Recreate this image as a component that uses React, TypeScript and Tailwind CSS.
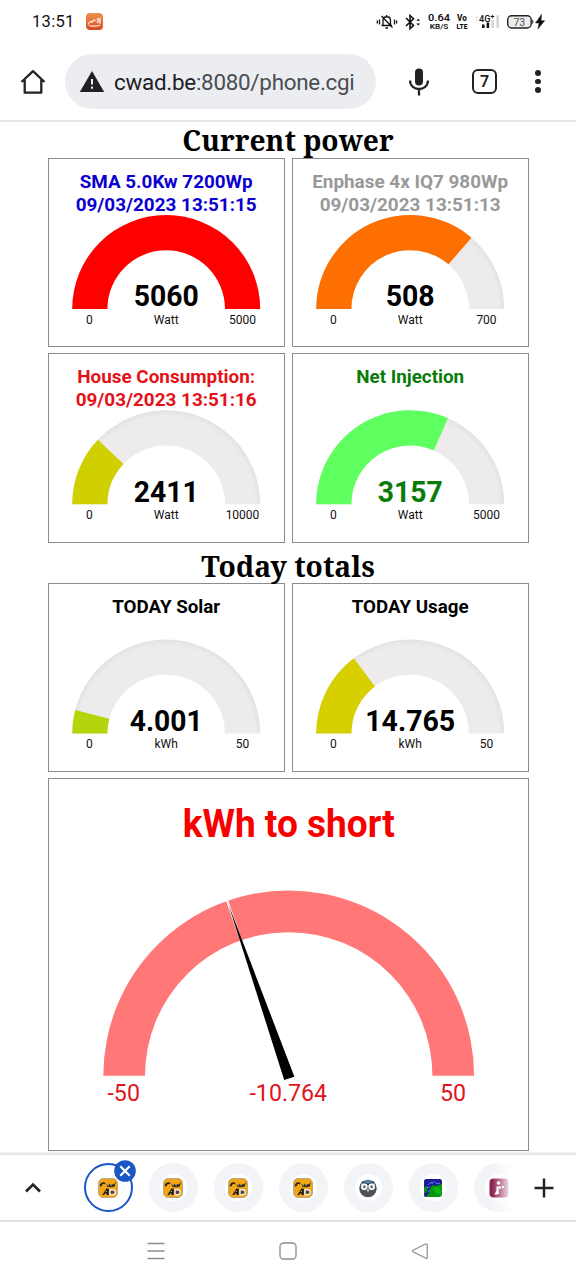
import type { ReactNode } from "react";

type GaugeProps = {
  title: string[];
  titleWidths: number[];
  titleColor: string;
  value: string;
  valueWidth: number;
  valueColor?: string;
  unit: string;
  max: string;
  ratio: number;
  color: string;
  shift?: number;
};

const SANS = "Roboto, 'Liberation Sans', sans-serif";

// Ring segment between two ratios of a half circle, measured from the left end.
function arc(cx: number, cy: number, outer: number, inner: number, from: number, to: number) {
  const point = (radius: number, ratio: number) => {
    const angle = Math.PI * (1 - ratio);
    return `${cx + radius * Math.cos(angle)} ${cy - radius * Math.sin(angle)}`;
  };
  return `M${point(inner, from)}L${point(outer, from)}A${outer} ${outer} 0 0 1 ${point(outer, to)}L${point(inner, to)}A${inner} ${inner} 0 0 0 ${point(inner, from)}Z`;
}

function Gauge(props: GaugeProps) {
  const cx = 118.2;
  const cy = 151;
  return (
    <div className="border border-[#8c8c8c] bg-white">
      <svg
        viewBox={`1 ${1 + (props.shift ?? 0)} 235 187`}
        className="block h-[187px] w-[235px]"
        fontFamily={SANS}
        textAnchor="middle"
      >
        <defs>
          <radialGradient id="track" gradientUnits="userSpaceOnUse" cx={cx} cy={cy} r="94">
            <stop offset="0.94" stopColor="#edebeb" />
            <stop offset="1" stopColor="#e3e1e1" />
          </radialGradient>
        </defs>
        {props.title.map((line, index) => (
          <text
            key={line}
            x={cx}
            y={30.2 + index * 22.3}
            fontSize="19.2"
            fontWeight="700"
            fill={props.titleColor}
            textLength={props.titleWidths[index]}
            lengthAdjust="spacingAndGlyphs"
          >
            {line}
          </text>
        ))}
        <path d={arc(cx, cy, 94, 58.8, 0, 1)} fill="url(#track)" />
        <path d={arc(cx, cy, 94, 58.8, 0, props.ratio)} fill={props.color} />
        <text
          x={cx}
          y="148.4"
          fontSize="29"
          fontWeight="700"
          fill={props.valueColor ?? "#000"}
          textLength={props.valueWidth}
          lengthAdjust="spacingAndGlyphs"
        >
          {props.value}
        </text>
        <g fontSize="12" fill="#111">
          <text x="41.3" y="165.8">0</text>
          <text x={cx} y="165.8">{props.unit}</text>
          <text x="194.5" y="165.8">{props.max}</text>
        </g>
      </svg>
    </div>
  );
}

function NeedleGauge() {
  return (
    <div className="h-[373px] w-[481px] border border-[#8c8c8c] bg-white">
      <svg viewBox="49 779 479 371" className="block h-[371px] w-[479px]" fontFamily={SANS} textAnchor="middle">
        <text
          x="288.7"
          y="837"
          fontSize="38.2"
          fontWeight="700"
          fill="#f90000"
          textLength="212"
          lengthAdjust="spacingAndGlyphs"
        >
          kWh to short
        </text>
        <path d={arc(288.7, 1075.8, 185.4, 143.7, 0, 1)} fill="#ff7777" />
        <path d="M227.1 900.5L241 940.5" stroke="#fff" strokeWidth="2.2" />
        <path d="M228.3 904L284.2 1080L294.4 1076.7Z" fill="#000" />
        <g fontSize="23.2" fill="#e0141c">
          <text x="123.7" y="1101.3">-50</text>
          <text x="288.3" y="1101.3">-10.764</text>
          <text x="453" y="1101.3">50</text>
        </g>
      </svg>
    </div>
  );
}

function Heading(props: { children: ReactNode; className: string }) {
  return (
    <h2
      className={`relative z-10 flex justify-center whitespace-nowrap font-['Noto_Serif','DejaVu_Serif_Condensed','DejaVu_Serif',serif] text-[28.2px] font-bold text-black ${props.className}`}
    >
      {props.children}
    </h2>
  );
}

function StatusBar() {
  return (
    <div className="flex h-[43px] items-center pl-[32px] font-[Roboto,sans-serif] text-[#111]">
      <span className="w-[54px] pt-[2px] text-[16.5px] tracking-[0.3px]">13:51</span>
      <svg viewBox="0 0 17 17" className="h-[17px] w-[17px]">
        <defs>
          <linearGradient id="app" x2="0" y2="1">
            <stop stopColor="#ee9350" />
            <stop offset="1" stopColor="#d94a20" />
          </linearGradient>
        </defs>
        <rect width="17" height="17" rx="4" fill="url(#app)" />
        <path d="M2 11.5l2-3 2 .7 2-2.4 1.6 1.2M10.5 7l2.5-2M3 12.5c3 1 9 .6 11-.5M11 10l3-4v5" fill="none" stroke="#fde7d8" strokeWidth="1.3" />
      </svg>
      <svg viewBox="375 10 172 24" className="ml-[272px] h-[24px] w-[172px]" fontFamily="Roboto, sans-serif" fill="#111">
        {/* muted bell */}
        <g fill="none" stroke="#111" strokeWidth="1.3">
          <path d="M381.5 25.5h10.5M383 25v-4.5c0-5 7.5-5 7.5 0V25M381.5 16l11 11.5M386.7 15v2M385.5 28h2.5" />
          <path d="M377.3 20.5v3M379.5 19.5v5M394.5 19.5v5M396.6 20.5v3" />
        </g>
        {/* bluetooth */}
        <path d="M406 18l7.5 7.5-3.5 3.2V15.5l3.5 3.2L406 26" fill="none" stroke="#111" strokeWidth="1.6" />
        <path d="M416.3 20.8l1.9-2 1.9 2zM416.3 23.5l1.9 2 1.9-2z" />
        <g textAnchor="middle" fontWeight="600">
          <text x="439" y="20.8" fontSize="9.4" textLength="22" lengthAdjust="spacingAndGlyphs">0.64</text>
          <text x="439" y="29.2" fontSize="7.4" textLength="18.5" lengthAdjust="spacingAndGlyphs">KB/S</text>
          <text x="462" y="20.8" fontSize="8.4" fontWeight="800" textLength="9.8" lengthAdjust="spacingAndGlyphs">Vo</text>
          <text x="462" y="28.6" fontSize="7.4" fontWeight="900" textLength="10.8" lengthAdjust="spacingAndGlyphs">LTE</text>
          <text x="484.7" y="21.6" fontSize="9.4" fontWeight="500" textLength="11.5" lengthAdjust="spacingAndGlyphs">4G</text>
          <text x="492.4" y="18.8" fontSize="7">+</text>
        </g>
        <path d="M475.3 17.7l1.3-1.5 1.3 1.5zM475.3 19.5l1.3 1.5 1.3-1.5z" fill="#ccc" />
        <path d="M482 24.5h2.6v3.5H482zM486.6 22.5h2.6v5.5h-2.6z" />
        <path d="M491.5 20h2.4v8h-2.4zM496.5 15.3h2.4V28h-2.4z" fill="#d2d2d2" />
        <rect x="507.7" y="15.7" width="23.5" height="12.3" rx="4" fill="#ececec" stroke="#222" strokeWidth="1.4" />
        <path d="M532.3 19.5c1.4.5 1.4 4 0 4.5z" />
        <text x="519.3" y="25.6" fontSize="10.5" fill="#555" textAnchor="middle">73</text>
        <path d="M541.5 14.5l-6 8.5h3.6l-1.2 6 6.7-8.3H541z" stroke="#111" strokeWidth="0.5" />
      </svg>
    </div>
  );
}

function BrowserBar() {
  return (
    <div className="flex h-[79px] items-center border-b-2 border-[#e4e4e6] pl-[20px]">
      <svg viewBox="0 0 26 26" className="h-[26px] w-[26px]" fill="none" stroke="#222" strokeWidth="2.3">
        <path d="M1.5 13L13 2.2 24.5 13M4.7 11v12.7h16.6V11" strokeLinejoin="round" />
      </svg>
      <div className="ml-[19px] flex h-[55px] w-[311px] items-center rounded-full bg-[#ebedf1] pl-[14px]">
        <svg viewBox="0 0 26 22" className="h-[22px] w-[26px]">
          <path d="M13 0L25.2 21H.8z" fill="#202124" />
          <path d="M12 8h2v5.5h-2zM12 15.5h2v2.2h-2z" fill="#ebedf1" />
        </svg>
        <span className="ml-[9px] whitespace-nowrap pt-[2px] font-[Roboto,sans-serif] text-[22.4px] tracking-[-0.26px] text-[#4a4d51]">
          <span className="text-[#202124]">cwad.be</span>:8080/phone.cgi
        </span>
      </div>
      <svg viewBox="0 0 20 28" className="ml-[33px] h-[28px] w-[20px]">
        <rect x="6" y="0.5" width="8" height="17" rx="4" fill="#222" />
        <path d="M1 12.5c0 11.3 18 11.3 18 0M10 21v6.5" fill="none" stroke="#222" strokeWidth="2.3" />
      </svg>
      <div className="ml-[43px] flex h-[25px] w-[25px] items-center justify-center rounded-[6px] border-[2.5px] border-[#222] pt-px font-[Roboto,sans-serif] text-[16px] font-semibold text-[#222]">
        7
      </div>
      <div className="ml-[38px] flex flex-col gap-[3px]">
        <span className="h-[5.5px] w-[5.5px] rounded-full bg-[#222]" />
        <span className="h-[5.5px] w-[5.5px] rounded-full bg-[#222]" />
        <span className="h-[5.5px] w-[5.5px] rounded-full bg-[#222]" />
      </div>
    </div>
  );
}

function CwadIcon() {
  return (
    <svg viewBox="0 0 20 20" className="h-[20px] w-[20px]">
      <rect x="0.5" y="0.5" width="19" height="19" rx="4.5" fill="#f2a516" stroke="#b9a88a" />
      <path d="M1.8 8.5C1.5 4.5 6 3.5 7.5 5l-.7 1.5C5.5 5.500 4 6 4 8zM8.500 5.500l1.500 2 1.200-2 1.300 1.800 1-1.300 2.500.5L18 3.500l-1.300 5-3.500.8-4-.6z" fill="#2b2622" />
      <path d="M10 8.2l.8-2M13 8.2l.8-2" stroke="#b8b0a0" fill="none" strokeWidth="0.8" />
      <path d="M4.3 17l4.200-6.500h2.300V17H8.600v-1.500H7L6.200 17z" fill="#201c18" />
      <path d="M12 11.800h2.300c4 0 4 5 0 5H12z" fill="#51483d" stroke="#f4eadb" strokeWidth="1.4" />
      <path d="M7.500 14l1.200-1.500V14z" fill="#fff" />
    </svg>
  );
}

function OwlIcon() {
  return (
    <svg viewBox="0 0 20 20" className="h-[20px] w-[20px]">
      <circle cx="10" cy="10.5" r="8.7" fill="#505255" />
      <path d="M2 7C4 1 16 1 18 7l-8 2z" fill="#4f86b5" />
      <path d="M4 3.5l6 3 6-3" fill="none" stroke="#383e44" strokeWidth="1.2" />
      <circle cx="6.3" cy="8.7" r="2.4" fill="#6b7073" stroke="#fff" strokeWidth="1.7" />
      <circle cx="13.7" cy="8.7" r="2.4" fill="#6b7073" stroke="#fff" strokeWidth="1.7" />
      <path d="M9 11.5h2l-1 3z" fill="#fff" />
    </svg>
  );
}

function MapIcon() {
  return (
    <svg viewBox="0 0 20 20" className="h-[20px] w-[20px]">
      <rect x="1" y="1" width="18" height="18" rx="3" fill="#08960f" />
      <path d="M1 4q0-3 3-3h12q3 0 3 3v2l-6 2-4-1-2 4-1 4-3 4q-2 0-2-2z" fill="#1b1b9c" />
      <path d="M1 9l4-1-1 6-3 2z" fill="#0a8a1c" />
      <path d="M5 7l3-3 1 2 2-3M12 4l2 2 3-1M4 10l3-1M5 14l2-2" fill="none" stroke="#6b7fe0" strokeWidth="0.9" />
      <path d="M10 10l5-1 3 4v4l-5-2z" fill="#0db713" />
    </svg>
  );
}

function RunnerIcon() {
  return (
    <svg viewBox="0 0 20 20" className="h-[20px] w-[20px]">
      <rect x="0.5" y="0.5" width="19" height="19" rx="4" fill="#8e2352" />
      <circle cx="9.5" cy="5" r="1.8" fill="#fff" />
      <path d="M6.5 16.5l2-3.5V9.5H12M8.700 10v4l.5 2" fill="none" stroke="#fff" strokeWidth="2" />
      <path d="M13 9h2" stroke="#fff" strokeWidth="2" />
    </svg>
  );
}

function Tab(props: { children: ReactNode }) {
  return (
    <div className="flex h-[49px] w-[49px] shrink-0 items-center justify-center rounded-full bg-[#f2f4f7]">
      <div className="flex h-[27px] w-[27px] items-center justify-center rounded-full bg-white">
        {props.children}
      </div>
    </div>
  );
}

function TabStrip() {
  return (
    <div className="flex h-[67px] items-center border-b-2 border-[#e2e2e2] bg-white pl-[24px]">
      <svg viewBox="0 0 18 18" className="h-[18px] w-[18px]">
        <path d="M2 12.5L9 5.5l7 7" fill="none" stroke="#222" strokeWidth="2.6" />
      </svg>
      <div className="relative ml-[41.5px] flex w-[428px] gap-[16.1px]">
        <div className="relative flex h-[49px] w-[49px] shrink-0 items-center justify-center rounded-full border-[2.5px] border-[#1a57c4]">
          <CwadIcon />
          <svg viewBox="0 0 22 22" className="absolute -top-[5px] right-[-5px] h-[22px] w-[22px]">
            <circle cx="11" cy="11" r="10.8" fill="#1a57c4" />
            <path d="M6.3 6.3l9.4 9.4M15.7 6.3l-9.4 9.4" stroke="#fff" strokeWidth="2.2" />
          </svg>
        </div>
        <Tab><CwadIcon /></Tab>
        <Tab><CwadIcon /></Tab>
        <Tab><CwadIcon /></Tab>
        <Tab><OwlIcon /></Tab>
        <Tab><MapIcon /></Tab>
        <div className="w-[38px] overflow-hidden">
          <Tab><RunnerIcon /></Tab>
        </div>
        <div className="absolute right-0 top-0 h-[49px] w-[20px] bg-linear-to-r from-white/0 to-white" />
      </div>
      <svg viewBox="0 0 20 20" className="ml-[22px] h-[20px] w-[20px]">
        <path d="M10 .5v19M.5 10h19" stroke="#222" strokeWidth="2.5" />
      </svg>
    </div>
  );
}

function SystemNav() {
  return (
    <div className="flex h-[57px] items-center justify-center gap-[114px] bg-white">
      <svg viewBox="0 0 18 18" className="h-[18px] w-[18px]">
        <path d="M.5 1.5h17M.5 9h17M.5 16.5h17" stroke="#8d8d8d" strokeWidth="1.4" />
      </svg>
      <svg viewBox="0 0 18 18" className="h-[18px] w-[18px]">
        <rect x="1" y="1" width="16" height="16" rx="3.5" fill="none" stroke="#8d8d8d" strokeWidth="1.3" />
      </svg>
      <svg viewBox="0 0 18 18" className="h-[18px] w-[18px]">
        <path d="M15 1.8L2 8.3q-1.1.7 0 1.4L15 16.3q1.2.3 1.2-1V2.7q0-1.2-1.2-.9z" fill="none" stroke="#8d8d8d" strokeWidth="1.2" />
      </svg>
    </div>
  );
}

export default function App() {
  return (
    <div className="flex h-[1280px] w-[576px] flex-col overflow-hidden bg-white">
      <StatusBar />
      <BrowserBar />
      <main className="h-[1033px] shrink-0 px-[48px]">
        <Heading className="h-[36px] leading-[37px]">Current power</Heading>
        <div className="grid grid-cols-[237px_237px] grid-rows-[189px_190px] gap-x-[7px] gap-y-[6px]">
          <Gauge
            title={["SMA 5.0Kw 7200Wp", "09/03/2023 13:51:15"]}
            titleWidths={[173, 181]}
            titleColor="#0b00d0"
            value="5060"
            valueWidth={65}
            unit="Watt"
            max="5000"
            ratio={1}
            color="#ff0000"
          />
          <Gauge
            title={["Enphase 4x IQ7 980Wp", "09/03/2023 13:51:13"]}
            titleWidths={[196, 181]}
            titleColor="#999999"
            value="508"
            valueWidth={49}
            unit="Watt"
            max="700"
            ratio={508 / 700}
            color="#fc6f00"
          />
          <Gauge
            title={["House Consumption:", "09/03/2023 13:51:16"]}
            titleWidths={[178, 181]}
            titleColor="#e51119"
            value="2411"
            valueWidth={65}
            unit="Watt"
            max="10000"
            ratio={0.2411}
            color="#d0cf00"
            shift={-0.3}
          />
          <Gauge
            title={["Net Injection"]}
            titleWidths={[108]}
            titleColor="#087b08"
            value="3157"
            valueWidth={65}
            valueColor="#087b08"
            unit="Watt"
            max="5000"
            ratio={3157 / 5000}
            color="#5fff5f"
            shift={-0.3}
          />
        </div>
        <Heading className="h-[40px] pt-[5px] leading-[37px]">Today totals</Heading>
        <div className="grid grid-cols-[237px_237px] grid-rows-[189px] gap-x-[7px]">
          <Gauge
            title={["TODAY Solar"]}
            titleWidths={[108]}
            titleColor="#000000"
            value="4.001"
            valueWidth={73}
            unit="kWh"
            max="50"
            ratio={4.001 / 50}
            color="#b4d40c"
            shift={0.5}
          />
          <Gauge
            title={["TODAY Usage"]}
            titleWidths={[117]}
            titleColor="#000000"
            value="14.765"
            valueWidth={90}
            unit="kWh"
            max="50"
            ratio={14.765 / 50}
            color="#d8cf00"
            shift={0.5}
          />
        </div>
        <div className="mt-[6px]">
          <NeedleGauge />
        </div>
        <div className="-mx-[48px] h-[4px] bg-linear-to-b from-white to-[#dedede]" />
      </main>
      <TabStrip />
      <SystemNav />
    </div>
  );
}
